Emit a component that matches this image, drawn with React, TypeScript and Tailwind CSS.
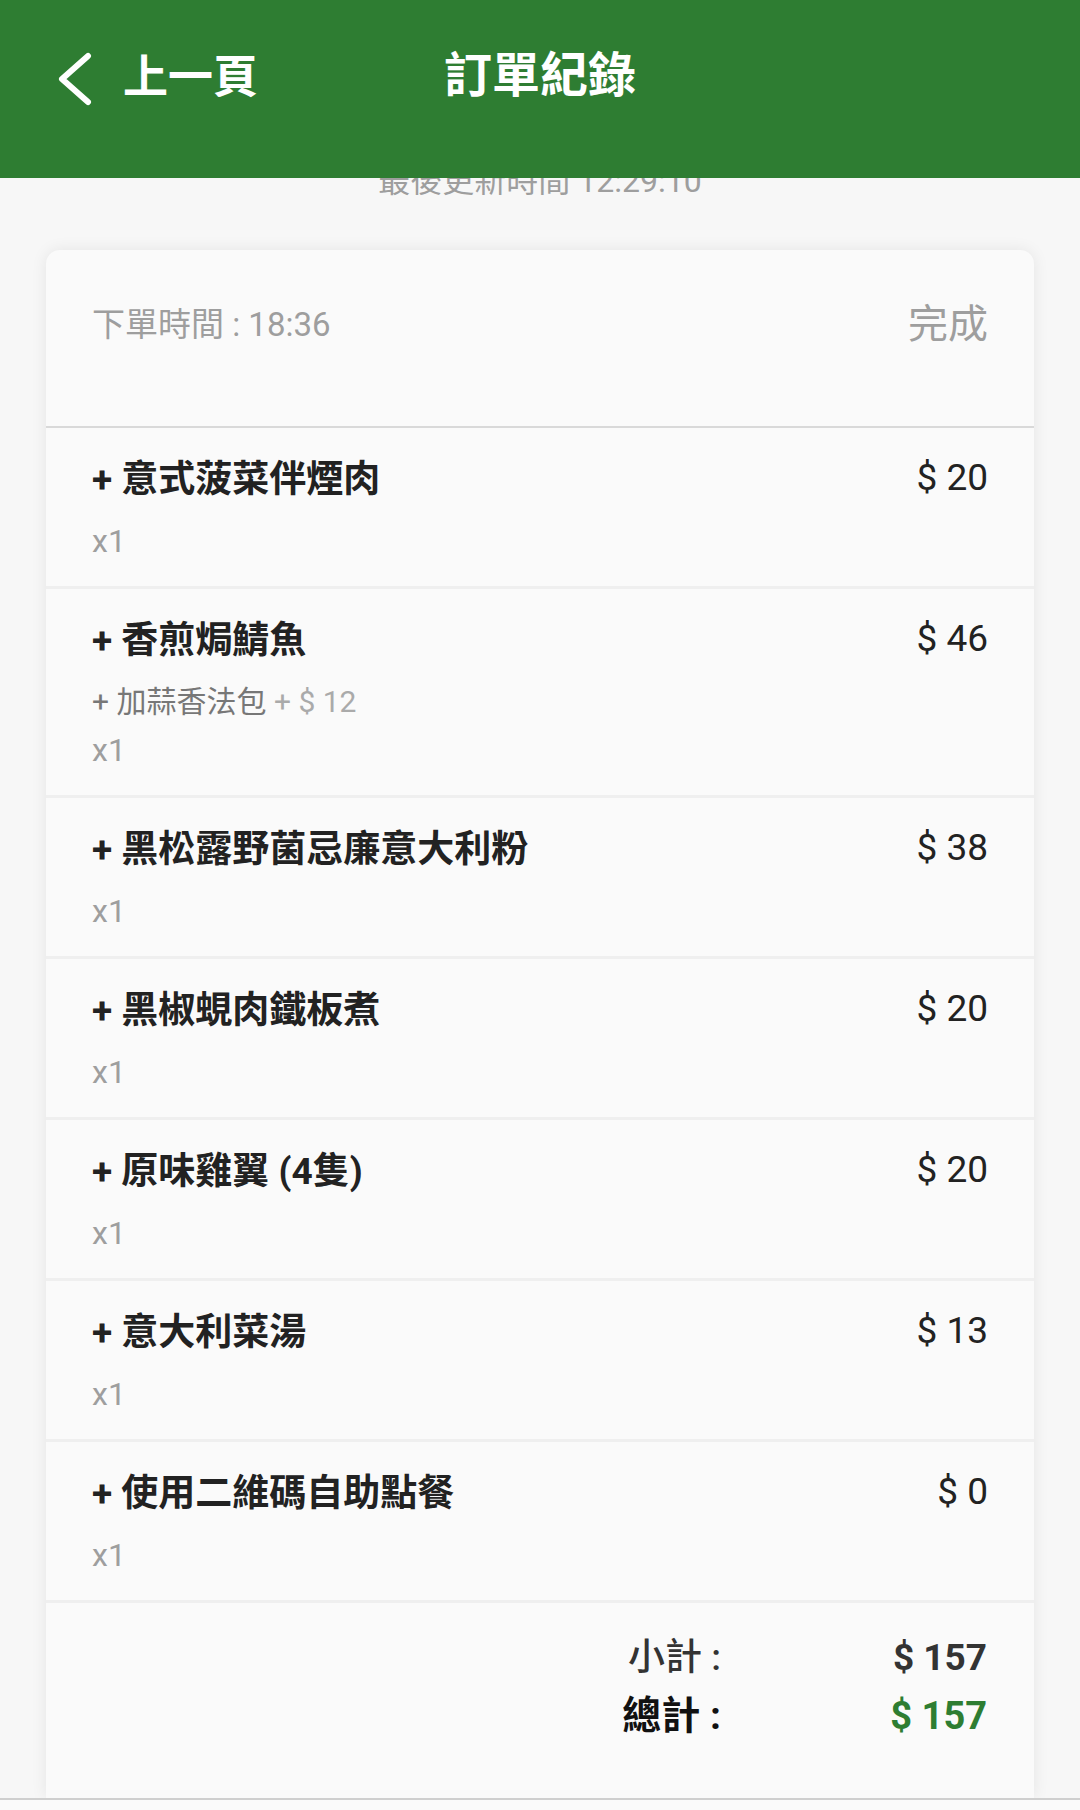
import React from "react";

type Item = {
  name: string;
  price: number;
  qty: number;
  addons?: { name: string; price: number }[];
};

const items: Item[] = [
  { name: "意式菠菜伴煙肉", price: 20, qty: 1 },
  { name: "香煎焗鯖魚", price: 46, qty: 1, addons: [{ name: "加蒜香法包", price: 12 }] },
  { name: "黑松露野菌忌廉意大利粉", price: 38, qty: 1 },
  { name: "黑椒蜆肉鐵板煮", price: 20, qty: 1 },
  { name: "原味雞翼 (4隻)", price: 20, qty: 1 },
  { name: "意大利菜湯", price: 13, qty: 1 },
  { name: "使用二維碼自助點餐", price: 0, qty: 1 },
];

const font = { fontFamily: 'Roboto, "Noto Sans CJK TC", "Noto Sans", sans-serif' };

function OrderRow({ item }: { item: Item }) {
  return (
    <div className="px-[46px] pt-[30px] pb-[20px] border-b-[3px] border-[#efefef]">
      <div className="flex items-start justify-between">
        <div className="text-[37px] leading-[44px] font-bold text-[#222]">
          + {item.name}
        </div>
        <div className="text-[37px] leading-[40px] text-[#222]">$ {item.price}</div>
      </div>
      <div className="mt-[15px]">
        {item.addons?.map((a) => (
          <div key={a.name} className="text-[30px] leading-[48px] text-[#777]">
            + {a.name} <span className="text-[#aaa]">+ $ {a.price}</span>
          </div>
        ))}
        <div className="text-[32px] leading-[49px] text-[#9e9e9e]">x{item.qty}</div>
      </div>
    </div>
  );
}

export default function App() {
  // item price already includes its add-ons
  const subtotal = items.reduce((s, i) => s + i.price * i.qty, 0);

  return (
    <div style={font} className="h-[1810px] w-[1080px] overflow-hidden bg-[#f7f7f7] flex flex-col">
      {/* HEADER */}
      <header className="relative z-10 h-[178px] shrink-0 bg-[#2e7d32] flex items-start pt-[50px]">
        <div className="flex items-center pl-[55px]">
          <svg width="38" height="54" viewBox="0 0 38 54" className="mt-[2px]">
            <polyline
              points="33,4 7,27 33,50"
              fill="none"
              stroke="white"
              strokeWidth="6"
              strokeLinecap="round"
              strokeLinejoin="round"
            />
          </svg>
          <span className="ml-[30px] text-[45px] leading-[52px] font-bold text-white">上一頁</span>
        </div>
        <div className="absolute left-0 right-0 top-[50px] text-center text-[48px] leading-[52px] font-bold text-white">
          訂單紀錄
        </div>
      </header>

      <div className="flex-1 flex flex-col overflow-hidden">
        <div className="-mt-[14px] text-center text-[32px] leading-[34px] text-[#9e9e9e]">
          最後更新時間 12:29:10
        </div>

        {/* CARD */}
        <div className="mx-[46px] mt-[52px] flex-1 rounded-t-[14px] bg-[#fafafa] shadow-[0_0_16px_rgba(0,0,0,0.08)]">
          <div className="h-[178px] px-[46px] pt-[55px] border-b-2 border-[#d9d9d9]">
            <div className="flex items-center justify-between h-[40px]">
              <span className="text-[33px] text-[#9e9e9e]">下單時間 : 18:36</span>
              <span className="text-[40px] text-[#9e9e9e]">完成</span>
            </div>
          </div>

          {items.map((item) => (
            <OrderRow key={item.name} item={item} />
          ))}

          <div className="flex justify-end pt-[26px] pr-[47px]">
            <div className="grid grid-cols-[auto_266px] text-right">
              <span className="text-[37px] leading-[58px] font-medium text-[#333]">小計 :</span>
              <span className="text-[37px] leading-[58px] font-bold text-[#333]">$ {subtotal}</span>
              <span className="text-[39px] leading-[58px] font-bold text-[#111]">總計 :</span>
              <span className="text-[38px] leading-[58px] font-bold text-[#2e7d32]">$ {subtotal}</span>
            </div>
          </div>
        </div>
      </div>

      <div className="h-[12px] shrink-0 border-t-2 border-[#cfcfcf] bg-[#fafafa]" />
    </div>
  );
}
